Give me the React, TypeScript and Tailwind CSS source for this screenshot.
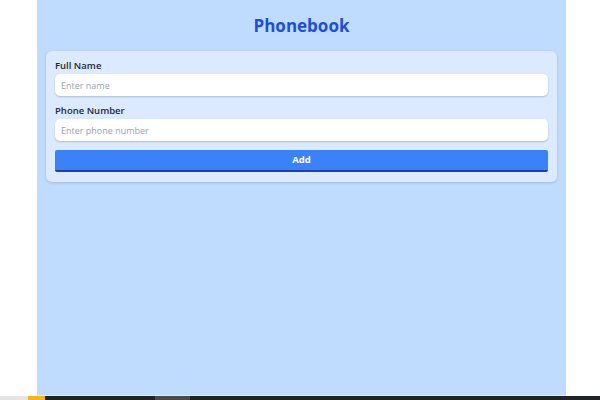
import { useState } from "react";

const App = () => {
  const [name, setName] = useState("");
  const [phone, setPhone] = useState("");

  return (
    <div className="w-[600px] h-[400px] bg-white flex flex-col overflow-hidden font-['Open_Sans',sans-serif]">
      <div className="flex-1 flex pl-[37px]">
        <div className="w-[529px] bg-[#bfdbfe] border-b border-[#dbeafe] flex flex-col px-[9px]">
          <h1 className="text-center text-[17px] font-bold text-[#1d4ed8] mt-[15px] leading-[22px]">
            Phonebook
          </h1>
          <div className="mt-[14px] bg-[#dbeafe] rounded-md shadow-[0_1px_3px_rgba(0,0,0,0.15)] px-[9px] pt-[9px] pb-[10px] flex flex-col">
            <label className="text-[9.5px] font-semibold text-[#1f2937] leading-[12px] mb-[2px]">
              Full Name
            </label>
            <input
              value={name}
              onChange={(e) => setName(e.target.value)}
              placeholder="Enter name"
              className="h-[22px] bg-white rounded-[5px] shadow-[0_1px_2px_rgba(0,0,0,0.2)] px-[6px] text-[9px] text-gray-700 placeholder:text-gray-400 outline-none"
            />
            <label className="text-[9.5px] font-semibold text-[#1f2937] leading-[12px] mt-[9px] mb-[2px]">
              Phone Number
            </label>
            <input
              value={phone}
              onChange={(e) => setPhone(e.target.value)}
              placeholder="Enter phone number"
              className="h-[22px] bg-white rounded-[5px] shadow-[0_1px_2px_rgba(0,0,0,0.2)] px-[6px] text-[9px] text-gray-700 placeholder:text-gray-400 outline-none"
            />
            <button className="mt-[9px] h-[22px] bg-[#3b82f6] border-b-2 border-[#1e40af] rounded-[2px] text-white text-[9.5px] font-bold">
              Add
            </button>
          </div>
        </div>
      </div>
      {/* taskbar strip */}
      <div className="h-[4px] flex bg-[#202326]">
        <div className="w-[28px] bg-[#e5e5e5]" />
        <div className="w-[17px] bg-[#f5b324]" />
        <div className="w-[110px]" />
        <div className="w-[35px] bg-[#4a4a4a]" />
      </div>
    </div>
  );
};

export default App;
